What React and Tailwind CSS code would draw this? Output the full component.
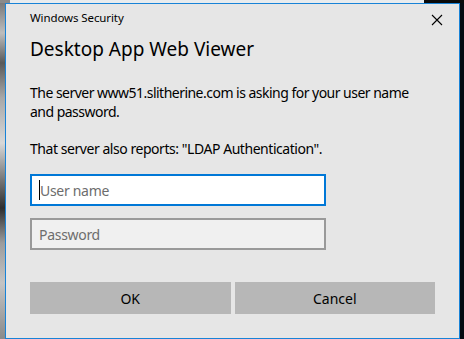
export default function App() {
  return (
    <div className="flex h-[339px] w-[464px] flex-col overflow-hidden bg-black font-['Segoe_UI','Noto_Sans',sans-serif]">
      {/* strip of desktop above the dialog */}
      <div className="flex h-[3px] shrink-0">
        <div className="w-[10px] bg-[#8a8a8a]" />
        <div className="w-[414px] bg-[#e9ecee]" />
        <div className="flex-1 bg-[#0a0a0a]" />
      </div>
      <div className="flex flex-1">
        {/* photo edge on the left */}
        <div className="w-[5px] bg-[linear-gradient(180deg,#7a7a7a_0px,#bdbdbd_30px,#5a5a5a_60px,#a8a8a8_95px,#d8d8d8_140px,#6e6e6e_180px,#2f2f2f_205px,#9c9c9c_240px,#c4c4c4_280px,#8a8a8a_336px)]" />
        {/* dialog */}
        <div className="flex w-[455px] flex-col border border-[#1883d7] bg-[#e6e6e6] text-black">
          <div className="flex items-start justify-between pl-[24px] pr-[16px] pt-[6px]">
            <p className="text-[11.5px] leading-[16px] tracking-[-0.1px]">Windows Security</p>
            <svg width="12" height="12" viewBox="0 0 12 12" className="mt-[4px] text-black">
              <path d="M1 1L11 11M11 1L1 11" stroke="currentColor" strokeWidth="1.1" fill="none" />
            </svg>
          </div>
          <div className="px-[24px]">
            <h1 className="mt-[9px] text-[19px] leading-[28px]">Desktop App Web Viewer</h1>
            <p className="mt-[20px] text-[14px] leading-[19px] tracking-[-0.52px]">
              The server www51.slitherine.com is asking for your user name and password.
            </p>
            <p className="mt-[18px] text-[14px] leading-[19px] tracking-[-0.45px]">
              That server also reports: "LDAP Authentication".
            </p>
            <div className="mt-[16px] flex flex-col gap-[12px]">
              <div className="flex h-[32px] w-[296px] items-center border-2 border-[#0078d7] bg-white pl-[7px]">
                <span className="h-[20px] w-px bg-black" />
                <span className="text-[14px] tracking-[-0.3px] text-[#6d6d6d]">User name</span>
              </div>
              <div className="flex h-[32px] w-[296px] items-center border-2 border-[#999] bg-[#f0f0f0] pl-[7px]">
                <span className="text-[14px] tracking-[-0.3px] text-[#6d6d6d]">Password</span>
              </div>
            </div>
            <div className="mt-[32px] flex gap-[4px]">
              <button className="h-[32px] w-[201px] bg-[#b7b7b7] text-[14px]">OK</button>
              <button className="h-[32px] w-[201px] bg-[#b7b7b7] text-[14px]">Cancel</button>
            </div>
          </div>
        </div>
        <div className="flex-1 bg-[#050a10]" />
      </div>
    </div>
  );
}
